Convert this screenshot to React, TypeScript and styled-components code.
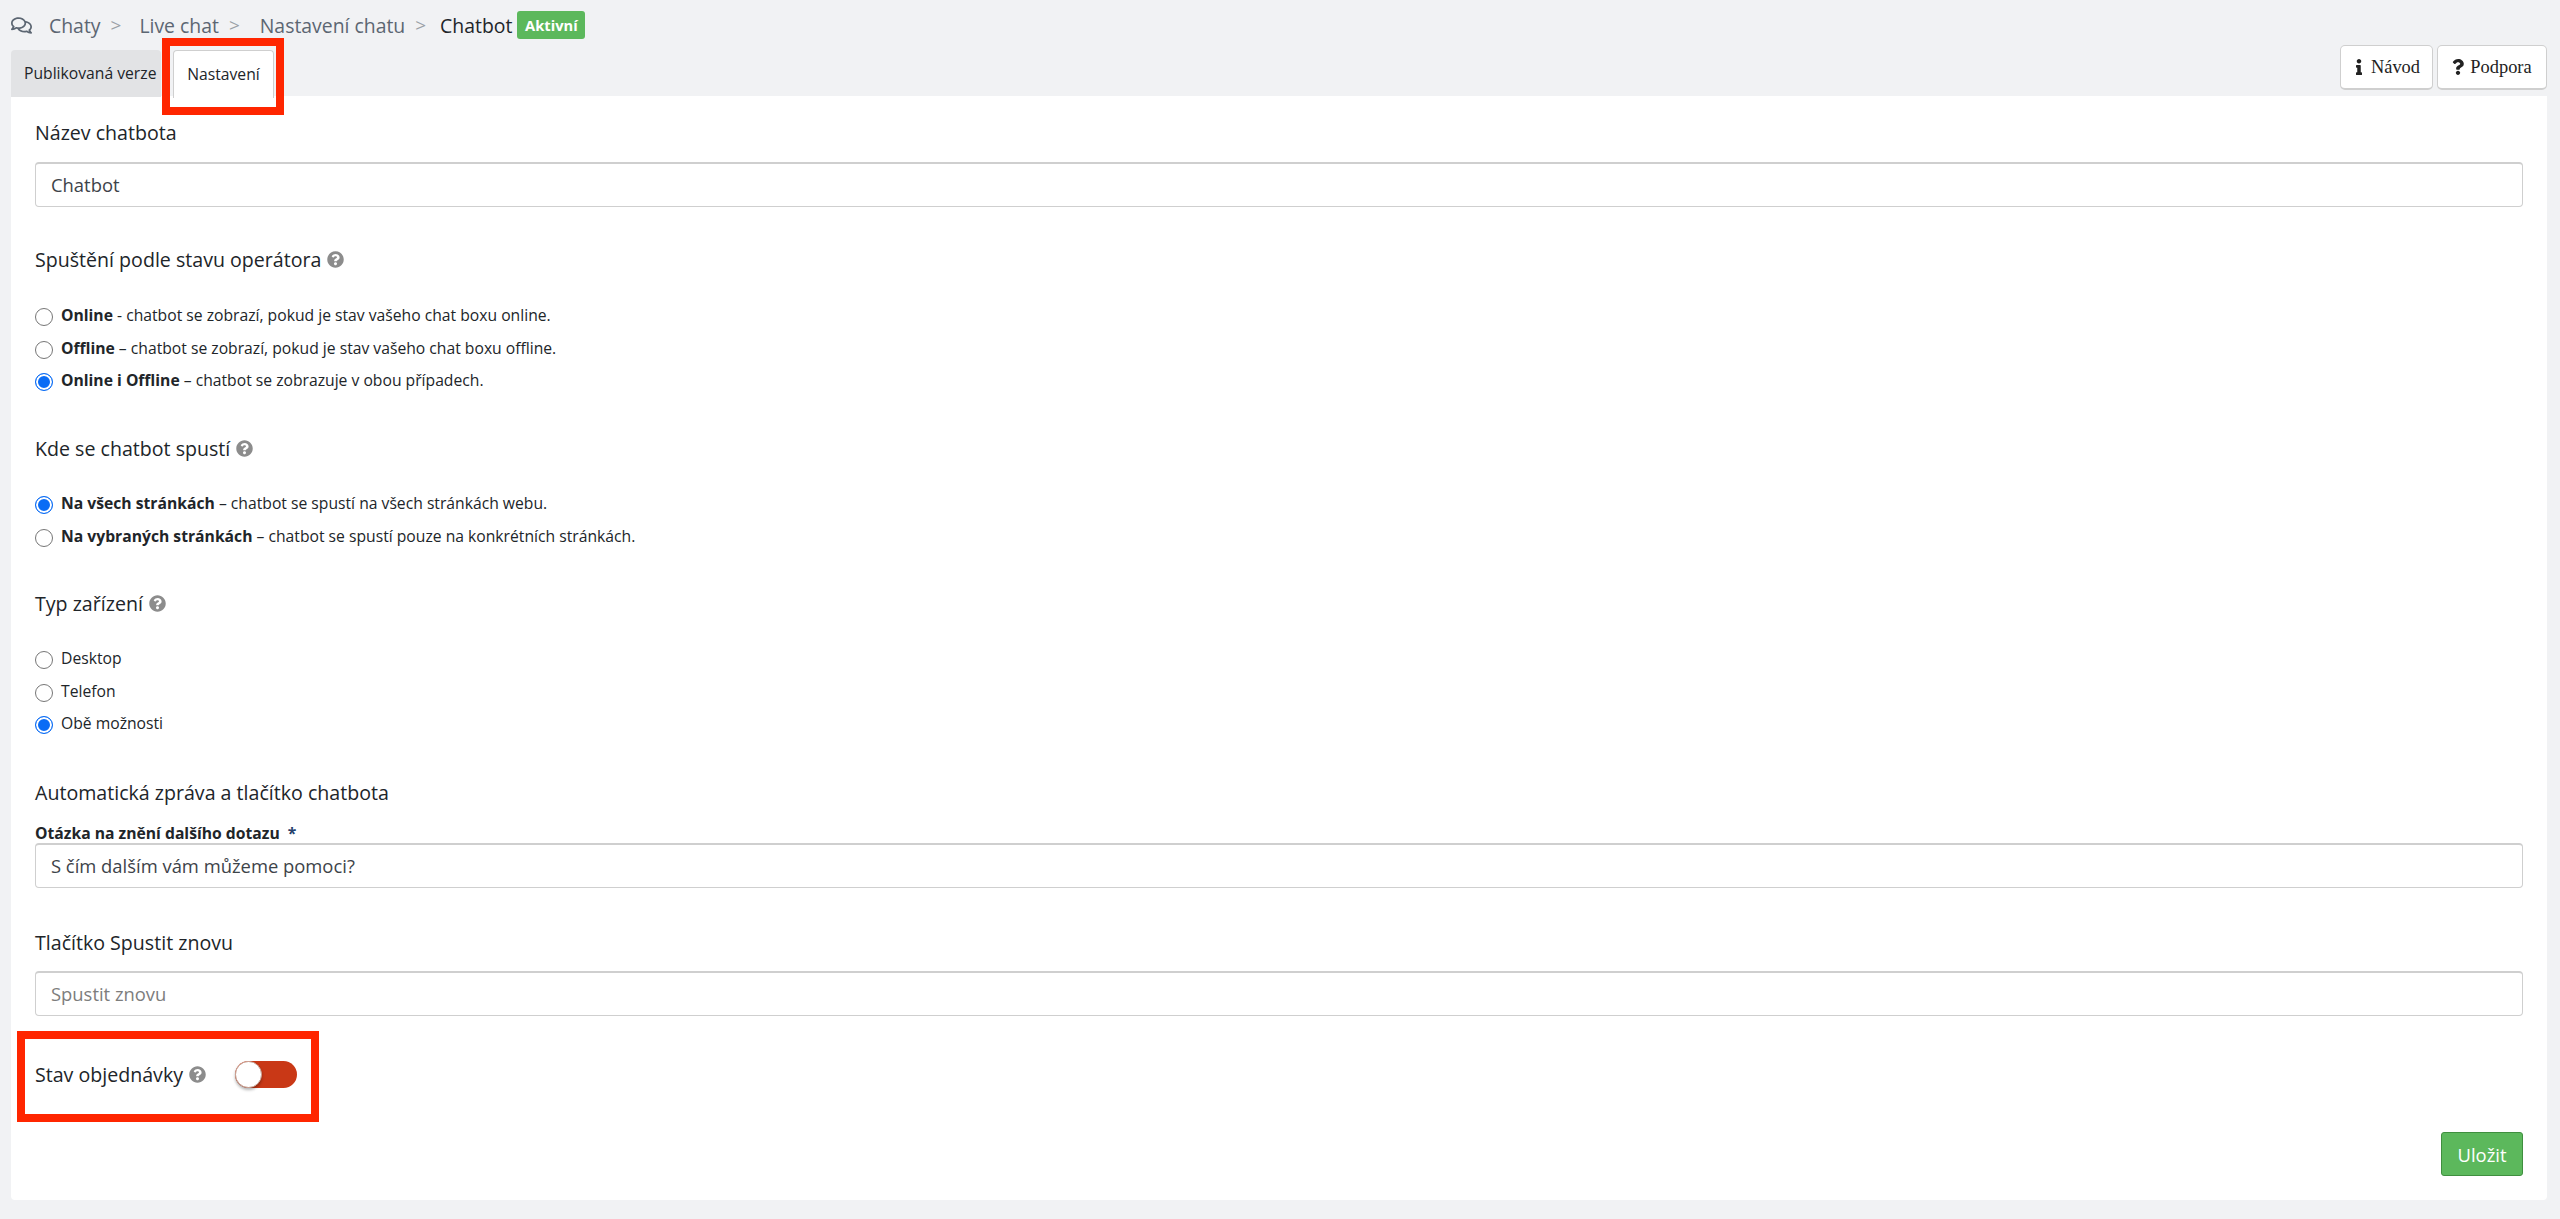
import React, { FC } from 'react';
import styled, { createGlobalStyle } from 'styled-components';
import { FaInfo, FaQuestion, FaQuestionCircle, FaRegComments } from 'react-icons/fa';

const GlobalStyle = createGlobalStyle`
  html, body {
    margin: 0;
    padding: 0;
    background: #f1f2f4;
    font-family: 'Open Sans', sans-serif;
    color: #212529;
  }
  * {
    box-sizing: border-box;
  }
`;

const Page = styled.div`
  width: 2560px;
  height: 1219px;
  padding: 0 13px 19px 11px;
  display: flex;
  flex-direction: column;
  overflow: hidden;
`;

const Breadcrumb = {
  Container: styled.div`
    height: 50px;
    display: flex;
    align-items: center;
    font-size: 19.4px;
    color: #5c6672;
  `,
  Icon: styled.span`
    display: flex;
    width: 38px;
    color: #5c6672;
    font-size: 21px;
  `,
  Separator: styled.span<{ $right: number }>`
    color: #9aa0a6;
    margin: 0 ${(props) => props.$right}px 0 10px;
    font-size: 19px;
  `,
  Current: styled.span`
    color: #212529;
  `,
  Badge: styled.span`
    margin-left: 5px;
    height: 28px;
    width: 68px;
    display: flex;
    align-items: center;
    justify-content: center;
    background: #5cb85c;
    border-radius: 3px;
    color: #fff;
    font-size: 14.7px;
    font-weight: 700;
  `,
};

const TabBar = styled.div`
  height: 46px;
  display: flex;
  justify-content: space-between;
`;

const Tabs = styled.div`
  display: flex;
`;

const Tab = styled.div<{ $active?: boolean }>`
  position: relative;
  flex-shrink: 0;
  white-space: nowrap;
  height: ${(props) => (props.$active ? '48px' : '47px')};
  display: flex;
  align-items: center;
  justify-content: ${(props) => (props.$active ? 'center' : 'flex-start')};
  font-size: 15.7px;
  padding: 0 0 1px ${(props) => (props.$active ? '0' : '13px')};
  border-radius: 4px 4px 0 0;
  width: ${(props) => (props.$active ? '101px' : '150px')};
  margin-left: ${(props) => (props.$active ? '12px' : '0')};
  background: ${(props) => (props.$active ? '#ffffff' : '#e2e3e5')};
  border: ${(props) => (props.$active ? '1px solid #cfcfcf' : 'none')};
  border-bottom: none;
`;

const TabHighlight = styled.div`
  position: absolute;
  left: -12px;
  top: -13px;
  width: 122px;
  height: 77px;
  border: 8px solid #ff2600;
  pointer-events: none;
`;

const HelpButtons = styled.div`
  display: flex;
  gap: 4px;
  margin-top: -5px;
`;

const HelpButton = styled.button<{ $width: number }>`
  width: ${(props) => props.$width}px;
  height: 45px;
  background: #fff;
  border: 1px solid #cfcfcf;
  border-bottom-width: 2px;
  border-radius: 5px;
  font-family: 'Liberation Serif', serif;
  font-size: 18.4px;
  color: #222;
  display: flex;
  align-items: center;
  justify-content: center;
  gap: 4px;
  padding: 0 2px 0 0;
  svg {
    height: 16px;
    width: auto;
  }
`;

const Panel = styled.div`
  flex: 1;
  background: #fff;
  border-radius: 0 0 4px 4px;
  padding: 0 24px 24px 24px;
  display: flex;
  flex-direction: column;
`;

const SectionTitle = styled.div<{ $top: number }>`
  height: 28px;
  flex-shrink: 0;
  margin-top: ${(props) => props.$top}px;
  display: flex;
  align-items: center;
  gap: 6px;
  font-size: 19.6px;
  color: #212529;
`;

const HelpIcon = styled(FaQuestionCircle)`
  color: #8c8c8c;
  font-size: 17px;
  flex-shrink: 0;
`;

const TextInput = styled.input<{ $top: number }>`
  display: block;
  width: 100%;
  height: 45px;
  flex-shrink: 0;
  margin-top: ${(props) => props.$top}px;
  padding: 0 15px 2px;
  border: 1px solid #cfcfcf;
  border-top-width: 2px;
  border-radius: 4px;
  font-family: inherit;
  font-size: 18.4px;
  color: #3d4349;
  outline: none;
  background: #fff;
  &::placeholder {
    color: #7d7d7d;
  }
`;

const RadioList = styled.div<{ $top: number }>`
  margin-top: ${(props) => props.$top}px;
  display: flex;
  flex-direction: column;
`;

const RadioRow = styled.label`
  height: 32.5px;
  display: flex;
  align-items: center;
  gap: 8px;
  font-size: 15.7px;
  color: #212529;
  b {
    font-weight: 700;
  }
`;

const RadioMark = styled.span<{ $checked?: boolean }>`
  width: 18px;
  height: 18px;
  margin-top: 4px;
  border-radius: 50%;
  flex-shrink: 0;
  border: 1.5px solid ${(props) => (props.$checked ? '#0a6cf5' : '#767676')};
  background: ${(props) => (props.$checked ? '#0a6cf5' : '#fff')};
  box-shadow: ${(props) => (props.$checked ? 'inset 0 0 0 2px #fff' : 'none')};
`;

const FieldLabel = styled.div`
  margin-top: 15px;
  height: 24px;
  flex-shrink: 0;
  display: flex;
  align-items: center;
  gap: 8px;
  font-size: 15.7px;
  font-weight: 700;
  color: #212529;
  span {
    color: #25406b;
  }
`;

const ToggleRow = styled.div`
  position: relative;
  height: 87px;
  flex-shrink: 0;
  margin-top: 15px;
  display: flex;
  align-items: center;
  font-size: 19.6px;
  color: #212529;
`;

const ToggleLabel = styled.div`
  display: flex;
  align-items: center;
  gap: 6px;
  width: 200px;
`;

const ToggleHighlight = styled.div`
  position: absolute;
  left: -18px;
  top: 0;
  width: 302px;
  height: 91px;
  border: 8px solid #ff2600;
  pointer-events: none;
`;

const Toggle = {
  Track: styled.div`
    position: relative;
    width: 62px;
    height: 27px;
    border-radius: 14px;
    background: #c93816;
  `,
  Knob: styled.div`
    position: absolute;
    left: 0;
    top: 0;
    width: 27px;
    height: 27px;
    border-radius: 50%;
    background: #fff;
    border: 1px solid #c9a598;
    box-shadow: 0 2px 3px rgba(0, 0, 0, 0.3);
  `,
};

const Footer = styled.div`
  margin-top: auto;
  display: flex;
  justify-content: flex-end;
`;

const SaveButton = styled.button`
  width: 82px;
  height: 44px;
  padding: 0;
  background: #5cb85c;
  border: 1px solid #3f8f3f;
  border-radius: 3px;
  color: #fff;
  font-family: inherit;
  font-size: 18.4px;
`;

const Title: FC<{ top: number; help?: boolean; children: React.ReactNode }> = ({
  top,
  help,
  children,
}) => (
  <SectionTitle $top={top}>
    {children}
    {help ? <HelpIcon /> : null}
  </SectionTitle>
);

const Radio: FC<{ checked?: boolean; children: React.ReactNode }> = ({
  checked,
  children,
}) => (
  <RadioRow>
    <RadioMark $checked={checked} />
    <span>{children}</span>
  </RadioRow>
);

export default function App() {
  return (
    <>
      <GlobalStyle />
      <Page>
        <Breadcrumb.Container>
          <Breadcrumb.Icon>
            <FaRegComments />
          </Breadcrumb.Icon>
          <span>Chaty</span>
          <Breadcrumb.Separator $right={18}>&gt;</Breadcrumb.Separator>
          <span>Live chat</span>
          <Breadcrumb.Separator $right={20}>&gt;</Breadcrumb.Separator>
          <span>Nastavení chatu</span>
          <Breadcrumb.Separator $right={14}>&gt;</Breadcrumb.Separator>
          <Breadcrumb.Current>Chatbot</Breadcrumb.Current>
          <Breadcrumb.Badge>Aktivní</Breadcrumb.Badge>
        </Breadcrumb.Container>
        <TabBar>
          <Tabs>
            <Tab>Publikovaná verze</Tab>
            <Tab $active>
              Nastavení
              <TabHighlight />
            </Tab>
          </Tabs>
          <HelpButtons>
            <HelpButton $width={93}>
              <FaInfo />
              Návod
            </HelpButton>
            <HelpButton $width={110}>
              <FaQuestion />
              Podpora
            </HelpButton>
          </HelpButtons>
        </TabBar>
        <Panel>
          <Title top={22}>Název chatbota</Title>
          <TextInput $top={16} defaultValue='Chatbot' />

          <Title top={38} help>
            Spuštění podle stavu operátora
          </Title>
          <RadioList $top={25.75}>
            <Radio>
              <b>Online</b> - chatbot se zobrazí, pokud je stav vašeho chat boxu online.
            </Radio>
            <Radio>
              <b>Offline</b> – chatbot se zobrazí, pokud je stav vašeho chat boxu offline.
            </Radio>
            <Radio checked>
              <b>Online i Offline</b> – chatbot se zobrazuje v obou případech.
            </Radio>
          </RadioList>

          <Title top={38} help>
            Kde se chatbot spustí
          </Title>
          <RadioList $top={24.75}>
            <Radio checked>
              <b>Na všech stránkách</b> – chatbot se spustí na všech stránkách webu.
            </Radio>
            <Radio>
              <b>Na vybraných stránkách</b> – chatbot se spustí pouze na konkrétních stránkách.
            </Radio>
          </RadioList>

          <Title top={37.25} help>
            Typ zařízení
          </Title>
          <RadioList $top={24.75}>
            <Radio>Desktop</Radio>
            <Radio>Telefon</Radio>
            <Radio checked>Obě možnosti</Radio>
          </RadioList>

          <Title top={38.75}>Automatická zpráva a tlačítko chatbota</Title>
          <FieldLabel>
            Otázka na znění dalšího dotazu <span>*</span>
          </FieldLabel>
          <TextInput $top={-2} defaultValue='S čím dalším vám můžeme pomoci?' />

          <Title top={40}>Tlačítko Spustit znovu</Title>
          <TextInput $top={15} placeholder='Spustit znovu' />

          <ToggleRow>
            <ToggleHighlight />
            <ToggleLabel>
              Stav objednávky
              <HelpIcon />
            </ToggleLabel>
            <Toggle.Track>
              <Toggle.Knob />
            </Toggle.Track>
          </ToggleRow>

          <Footer>
            <SaveButton>Uložit</SaveButton>
          </Footer>
        </Panel>
      </Page>
    </>
  );
}
